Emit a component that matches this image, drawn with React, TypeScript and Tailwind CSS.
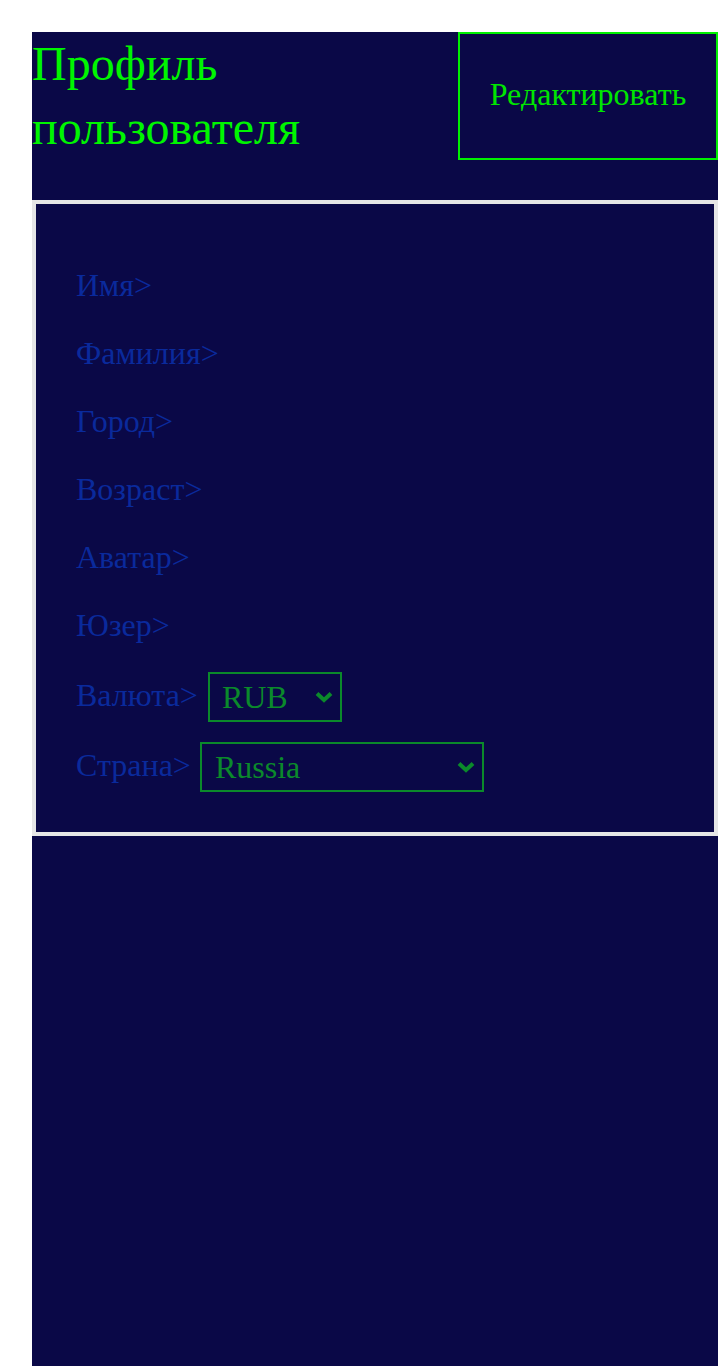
import React from "react";

const serif = "font-['Liberation_Serif','Times_New_Roman',serif]";

function Chevron() {
  return (
    <svg
      className="pointer-events-none absolute right-[8px] top-1/2 -translate-y-1/2"
      width="20"
      height="14"
      viewBox="0 0 20 14"
      fill="none"
    >
      <path d="M3 3.5 L10 10 L17 3.5" stroke="#0b8a2b" strokeWidth="4" strokeLinecap="butt" strokeLinejoin="miter" />
    </svg>
  );
}

function Select({ value, options, width, pad }: { value: string; options: string[]; width: string; pad: string }) {
  return (
    <div className={`relative ${width} h-[50px]`}>
      <select
        defaultValue={value}
        className={`${serif} ${pad} h-full w-full appearance-none border-2 border-[#0b8a2b] bg-transparent text-[32px] leading-[46px] text-[#0b8a2b] outline-none`}
      >
        {options.map((o) => (
          <option key={o} value={o} className="bg-[#0a0847]">
            {o}
          </option>
        ))}
      </select>
      <Chevron />
    </div>
  );
}

export default function App() {
  const rows = ["Имя>", "Фамилия>", "Город>", "Возраст>", "Аватар>", "Юзер>"];
  return (
    <div className={`${serif} min-h-[1366px] bg-white pl-[32px] pt-[32px]`}>
      <div className="min-h-[1334px] bg-[#0a0847]">
        <div className="flex items-start justify-between pb-[40px]">
          <h1 className="w-[400px] text-[48px] leading-[64px] text-[#00f500]">Профиль пользователя</h1>
          <button className="flex h-[128px] w-[260px] items-center justify-center border-2 border-[#00f000] pb-[5px] text-[32px] text-[#00e600]">
            Редактировать
          </button>
        </div>
        <div className="border-4 border-[#e6e6e6] pb-[40px] pl-[40px] pt-[57px]">
          <div className="flex flex-col gap-[20px]">
            {rows.map((r) => (
              <div key={r} className="h-[48px] text-[32px] leading-[48px] text-[#0a2a9c]">
                {r}
              </div>
            ))}
            <div className="mt-[3px] flex h-[50px] items-start gap-[10px]">
              <span className="text-[32px] leading-[46px] text-[#0a2a9c]">Валюта&gt;</span>
              <Select value="RUB" options={["RUB", "EUR", "USD"]} width="w-[134px]" pad="pl-[12px]" />
            </div>
            <div className="flex h-[50px] items-start gap-[9px]">
              <span className="text-[32px] leading-[46px] text-[#0a2a9c]">Страна&gt;</span>
              <Select value="Russia" options={["Russia", "Belarus", "Kazakhstan"]} width="w-[284px]" pad="pl-[13px]" />
            </div>
          </div>
        </div>
      </div>
    </div>
  );
}
